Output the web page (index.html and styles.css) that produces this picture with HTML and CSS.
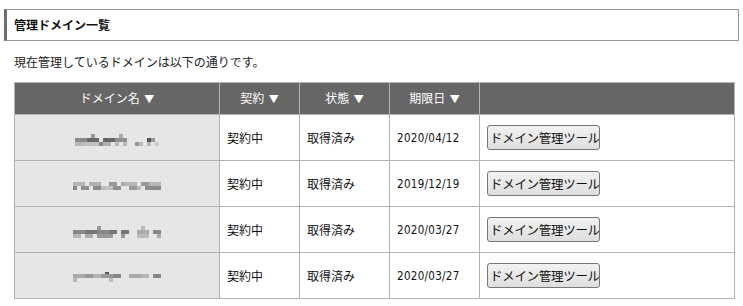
FILE: index.html
```html
<!DOCTYPE html>
<html lang="ja">
<head>
<meta charset="utf-8">
<link rel="stylesheet" href="styles.css">
</head>
<body>
<h2 class="title">管理ドメイン一覧</h2>
<p class="lead">現在管理しているドメインは以下の通りです。</p>
<table class="domains">
  <colgroup>
    <col class="c-name"><col class="c-contract"><col class="c-state"><col class="c-date"><col>
  </colgroup>
  <thead>
    <tr>
      <th>ドメイン名 <span class="arrow">▼</span></th>
      <th>契約 <span class="arrow">▼</span></th>
      <th>状態 <span class="arrow">▼</span></th>
      <th>期限日 <span class="arrow">▼</span></th>
      <th></th>
    </tr>
  </thead>
  <tbody>
    <tr>
      <td class="name">
        <svg class="blur" width="84" height="12" viewBox="0 0 84 12">
          <rect x="0" y="4" width="12" height="4" fill="#8a8a8a"/><rect x="0" y="8" width="8" height="4" fill="#b8b8b8"/>
          <rect x="12" y="4" width="12" height="4" fill="#6a6a6a"/><rect x="16" y="0" width="4" height="4" fill="#999"/>
          <rect x="8" y="8" width="16" height="4" fill="#c0c0c0"/><rect x="24" y="8" width="4" height="4" fill="#888"/>
          <rect x="28" y="4" width="12" height="4" fill="#666"/><rect x="28" y="8" width="8" height="4" fill="#b0b0b0"/>
          <rect x="40" y="4" width="12" height="4" fill="#909090"/><rect x="44" y="0" width="4" height="4" fill="#aaa"/>
          <rect x="40" y="8" width="4" height="4" fill="#bbb"/><rect x="48" y="8" width="4" height="4" fill="#bbb"/>
          <rect x="60" y="8" width="8" height="4" fill="#999"/><rect x="64" y="8" width="4" height="4" fill="#bbb"/>
          <rect x="72" y="4" width="4" height="4" fill="#555"/><rect x="76" y="4" width="4" height="4" fill="#999"/>
          <rect x="72" y="8" width="4" height="4" fill="#bbb"/><rect x="80" y="8" width="4" height="4" fill="#ccc"/>
        </svg>
      </td>
      <td>契約中</td>
      <td>取得済み</td>
      <td class="date">2020/04/12</td>
      <td class="act"><button class="tool">ドメイン管理ツール</button></td>
    </tr>
    <tr>
      <td class="name">
        <svg class="blur" width="88" height="8" viewBox="0 0 88 8">
          <rect x="0" y="0" width="12" height="4" fill="#b5b5b5"/><rect x="0" y="4" width="4" height="4" fill="#888"/>
          <rect x="8" y="4" width="8" height="4" fill="#8e8e8e"/><rect x="16" y="0" width="12" height="4" fill="#b0b0b0"/>
          <rect x="20" y="4" width="8" height="4" fill="#8a8a8a"/><rect x="28" y="4" width="4" height="4" fill="#bbb"/>
          <rect x="36" y="0" width="8" height="4" fill="#999"/><rect x="32" y="4" width="8" height="4" fill="#c0c0c0"/>
          <rect x="40" y="4" width="8" height="4" fill="#909090"/><rect x="48" y="0" width="8" height="4" fill="#aaa"/>
          <rect x="52" y="0" width="12" height="4" fill="#b5b5b5"/><rect x="56" y="4" width="8" height="4" fill="#999"/>
          <rect x="64" y="4" width="4" height="4" fill="#bbb"/><rect x="68" y="0" width="8" height="4" fill="#999"/>
          <rect x="72" y="4" width="16" height="4" fill="#8a8a8a"/><rect x="76" y="0" width="12" height="4" fill="#b5b5b5"/>
        </svg>
      </td>
      <td>契約中</td>
      <td>取得済み</td>
      <td class="date">2019/12/19</td>
      <td class="act"><button class="tool">ドメイン管理ツール</button></td>
    </tr>
    <tr>
      <td class="name">
        <svg class="blur" width="88" height="12" viewBox="0 0 88 12">
          <rect x="0" y="4" width="12" height="4" fill="#888"/><rect x="0" y="8" width="8" height="4" fill="#b5b5b5"/>
          <rect x="12" y="4" width="12" height="4" fill="#777"/><rect x="12" y="8" width="8" height="4" fill="#aaa"/>
          <rect x="24" y="0" width="4" height="4" fill="#999"/><rect x="24" y="4" width="12" height="4" fill="#888"/>
          <rect x="24" y="8" width="16" height="4" fill="#999"/><rect x="36" y="4" width="8" height="4" fill="#777"/>
          <rect x="48" y="4" width="8" height="4" fill="#777"/><rect x="48" y="8" width="4" height="4" fill="#999"/>
          <rect x="64" y="4" width="12" height="4" fill="#aaa"/><rect x="68" y="0" width="4" height="4" fill="#bbb"/>
          <rect x="64" y="8" width="12" height="4" fill="#bbb"/><rect x="80" y="4" width="8" height="4" fill="#888"/>
          <rect x="84" y="8" width="4" height="4" fill="#aaa"/>
        </svg>
      </td>
      <td>契約中</td>
      <td>取得済み</td>
      <td class="date">2020/03/27</td>
      <td class="act"><button class="tool">ドメイン管理ツール</button></td>
    </tr>
    <tr>
      <td class="name">
        <svg class="blur" width="88" height="12" viewBox="0 0 88 12">
          <rect x="0" y="2" width="12" height="4" fill="#aaa"/><rect x="0" y="6" width="4" height="4" fill="#bbb"/>
          <rect x="12" y="2" width="8" height="4" fill="#999"/><rect x="20" y="2" width="8" height="4" fill="#b5b5b5"/>
          <rect x="28" y="2" width="12" height="4" fill="#999"/><rect x="32" y="0" width="4" height="2" fill="#555"/>
          <rect x="36" y="6" width="4" height="4" fill="#bbb"/><rect x="40" y="2" width="8" height="4" fill="#888"/>
          <rect x="56" y="2" width="12" height="4" fill="#aaa"/><rect x="68" y="2" width="8" height="4" fill="#b5b5b5"/>
          <rect x="80" y="2" width="8" height="4" fill="#888"/>
        </svg>
      </td>
      <td>契約中</td>
      <td>取得済み</td>
      <td class="date">2020/03/27</td>
      <td class="act"><button class="tool">ドメイン管理ツール</button></td>
    </tr>
  </tbody>
</table>
</body>
</html>
```

FILE: styles.css
```css
html, body {
  margin: 0;
  padding: 0;
  background: #fff;
}
body {
  font-family: "Noto Sans CJK JP", "DejaVu Sans", sans-serif;
  font-size: 12px;
  color: #222;
  padding: 9px 4px 0 4px;
}
.title {
  margin: 0;
  height: 30px;
  box-sizing: content-box;
  border: 1px solid #999;
  border-left: 3px solid #6e6e6e;
  padding: 0 0 0 7px;
  font-size: 12px;
  font-weight: bold;
  line-height: 30px;
  color: #111;
}
.lead {
  margin: 12px 0 0 10px;
  line-height: 18px;
  color: #222;
}
.domains {
  margin: 11px 0 0 10px;
  width: 721px;
  border-collapse: collapse;
  table-layout: fixed;
  border: 1px solid #b3b3b3;
}
.c-name { width: 205px; }
.c-contract { width: 80px; }
.c-state { width: 90px; }
.c-date { width: 90px; }
.domains th {
  background: #666;
  color: #fff;
  font-weight: normal;
  height: 30px;
  padding: 0;
  border: 1px solid #b3b3b3;
  border-bottom: 0;
  text-align: center;
  line-height: 30px;
}
.arrow {
  font-size: 10px;
  margin-left: 2px;
}
.domains td {
  height: 45px;
  padding: 0 0 0 7px;
  border: 1px solid #b3b3b3;
  vertical-align: middle;
  color: #111;
}
.domains td.name {
  background: #e6e6e6;
  text-align: center;
  padding: 0;
}
.blur {
  display: inline-block;
  vertical-align: middle;
}
.domains td.date {
  font-family: "DejaVu Sans Condensed", "Liberation Sans Narrow", sans-serif;
  font-size: 11.5px;
  letter-spacing: 0.3px;
}
.tool {
  width: 113px;
  height: 25px;
  padding: 0 0 0 2px;
  font-family: "Noto Sans CJK JP", sans-serif;
  font-size: 12.5px;
  color: #111;
  text-align: left;
  white-space: nowrap;
  overflow: hidden;
  border: 1px solid #777;
  border-radius: 3px;
  background: linear-gradient(#f2f2f2, #dedede);
  letter-spacing: -0.3px;
}
```
